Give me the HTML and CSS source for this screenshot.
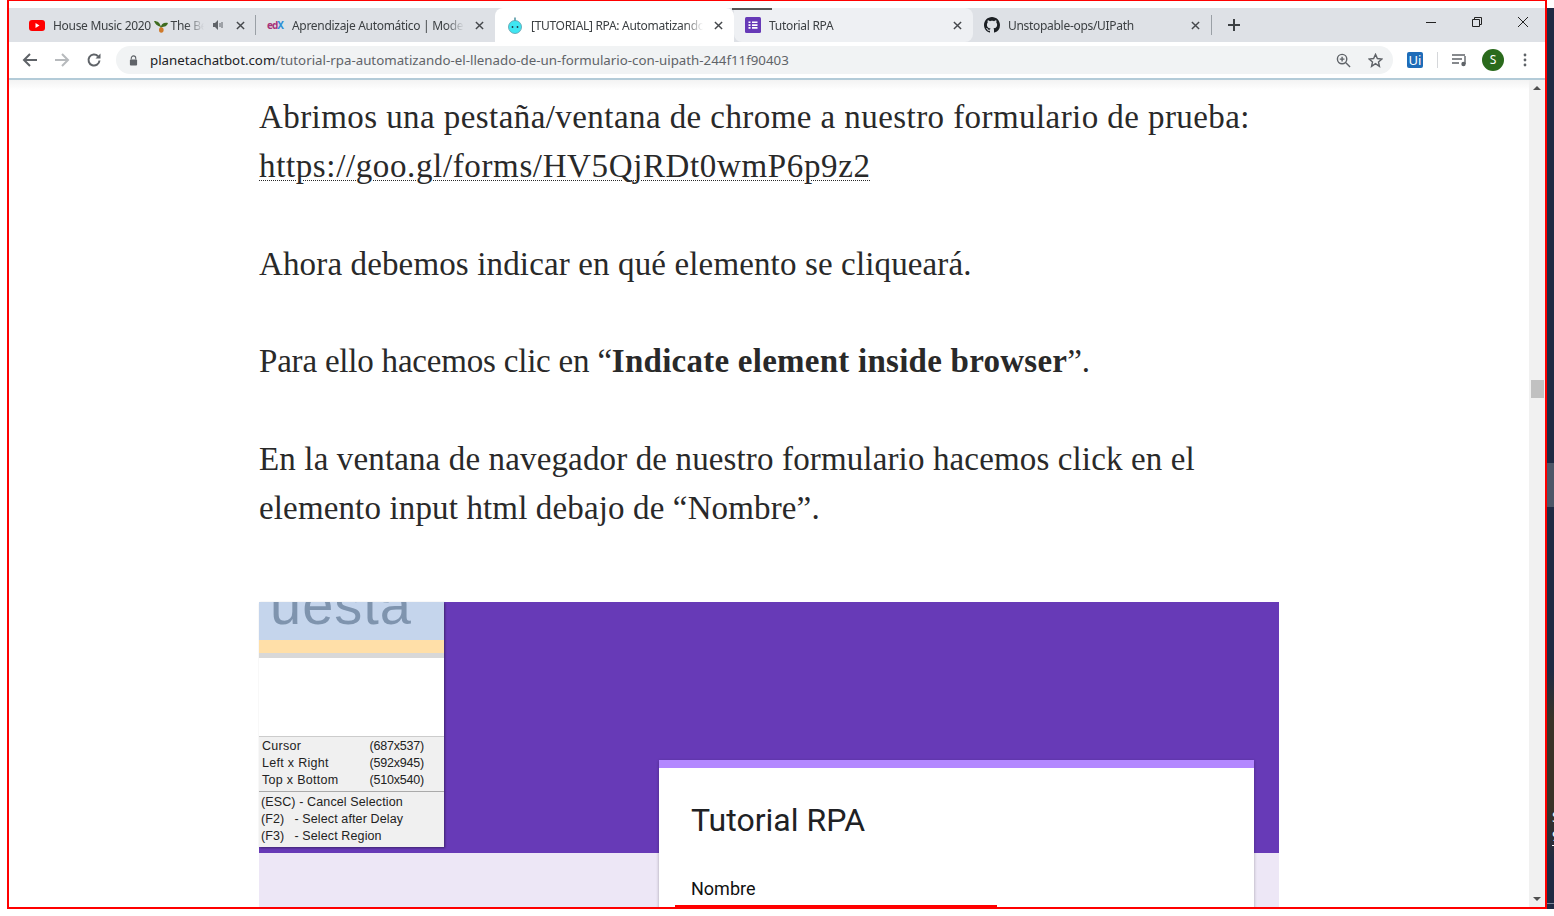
FILE: index.html
```html
<!DOCTYPE html>
<html lang="es">
<head>
    <meta charset="UTF-8">
    <title>[TUTORIAL] RPA: Automatizando</title>
    <link rel="stylesheet" href="styles.css">
</head>
<body>
    <div class="window">
        <div class="tabstrip">
            <div class="tab">
                <svg class="favicon" viewBox="0 0 16 16"><rect x="0" y="3" width="16" height="11" rx="3" fill="#f00"/><path d="M6.500 6v5l4-2.500z" fill="#fff"/></svg>
                <span class="tab-title">House Music 2020 <svg class="sprout" viewBox="0 0 14 14"><path d="M7 8C6 4 4 2 0 2c1 3 3 5 7 6zM7 8c0-3 3-5 7-4-1 3-3 4-7 4z" fill="#3d6b1f"/><path d="M7 7v3" stroke="#3d6b1f"/><ellipse cx="7.300" cy="11" rx="2.300" ry="2.800" fill="#d07a2b"/></svg> The Best Mix</span>
                <svg class="speaker" viewBox="0 0 12 12"><path d="M1 4h2l3-3v10L3 8H1z" fill="#5f6368"/><path d="M8 4v4M10 3v6" stroke="#5f6368" fill="none"/></svg>
                <svg class="close" viewBox="0 0 10 10"><path d="M1 1l8 8M9 1l-8 8"/></svg>
            </div>
            <div class="tab-sep"></div>
            <div class="tab">
                <span class="edx"><span class="edx-e">ed</span>X</span>
                <span class="tab-title">Aprendizaje Automático | Modelos</span>
                <svg class="close" viewBox="0 0 10 10"><path d="M1 1l8 8M9 1l-8 8"/></svg>
            </div>
            <div class="tab tab-active">
                <svg class="favicon favicon-tall" viewBox="0 0 16 18"><circle cx="8" cy="11" r="6.500" fill="#3fe6f2" stroke="#5a9aa8" stroke-width=".8"/><path d="M8 4.500V1.500" stroke="#3d8a98" stroke-width="1.400"/><circle cx="5.500" cy="11" r=".9" fill="#234"/><circle cx="10.500" cy="11" r=".9" fill="#234"/></svg>
                <span class="tab-title">[TUTORIAL] RPA: Automatizando el llenado</span>
                <svg class="close" viewBox="0 0 10 10"><path d="M1 1l8 8M9 1l-8 8"/></svg>
            </div>
            <div class="tab tab-hover">
                <svg class="favicon" viewBox="0 0 16 16"><rect width="16" height="16" rx="1.500" fill="#673ab7"/><path d="M3.500 4.500h2v1.600h-2zM7 4.500h5.500v1.600H7zM3.500 7.300h2v1.600h-2zM7 7.300h5.500v1.600H7zM3.500 10.100h2v1.600h-2zM7 10.100h5.500v1.600H7z" fill="#fff"/></svg>
                <span class="tab-title">Tutorial RPA</span>
                <svg class="close" viewBox="0 0 10 10"><path d="M1 1l8 8M9 1l-8 8"/></svg>
            </div>
            <div class="tab">
                <svg class="favicon" viewBox="0 0 16 16"><path fill="#1b1f23" d="M8 0C3.580 0 0 3.580 0 8c0 3.540 2.290 6.530 5.470 7.590.4.070.55-.17.55-.38 0-.19-.01-.82-.01-1.490-2.010.37-2.530-.49-2.690-.94-.09-.23-.48-.94-.82-1.130-.28-.15-.68-.52-.01-.53.63-.01 1.080.58 1.230.82.72 1.210 1.870.87 2.330.66.07-.52.28-.87.51-1.070-1.780-.2-3.640-.89-3.640-3.950 0-.87.31-1.590.82-2.150-.08-.2-.36-1.020.08-2.120 0 0 .67-.21 2.200.82.64-.18 1.320-.27 2-.27s1.360.09 2 .27c1.530-1.040 2.200-.82 2.200-.82.44 1.100.16 1.920.08 2.120.51.56.82 1.270.82 2.150 0 3.070-1.870 3.750-3.650 3.950.29.25.54.73.54 1.480 0 1.070-.01 1.930-.01 2.200 0 .21.15.46.55.38A8.010 8.010 0 0 0 16 8c0-4.420-3.580-8-8-8z"/></svg>
                <span class="tab-title">Unstopable-ops/UIPath</span>
                <svg class="close" viewBox="0 0 10 10"><path d="M1 1l8 8M9 1l-8 8"/></svg>
            </div>
            <div class="tab-sep"></div>
            <svg class="newtab" viewBox="0 0 12 12"><path d="M6 0v12M0 6h12"/></svg>
            <div class="winctrls">
                <svg viewBox="0 0 12 12"><path d="M1 6.500h10"/></svg>
                <svg viewBox="0 0 12 12"><path d="M1.500 3.500h7v7h-7zM3.500 3.500v-2h7v7h-2"/></svg>
                <svg viewBox="0 0 12 12"><path d="M1 1l10 10M11 1L1 11"/></svg>
            </div>
            <div class="tab-notch"></div>
        </div>
        <div class="toolbar">
            <svg class="navicon" viewBox="0 0 16 16"><path d="M15 8H2M8 2L2 8l6 6"/></svg>
            <svg class="navicon nav-off" viewBox="0 0 16 16"><path d="M1 8h13M8 2l6 6-6 6"/></svg>
            <svg class="navicon" viewBox="0 0 16 16"><path d="M13.500 8.500A5.500 5.500 0 1 1 12 4.200"/><path class="solid" d="M14.500 1.500v5h-5z"/></svg>
            <div class="omnibox">
                <svg class="lock" viewBox="0 0 10 12"><path d="M2.500 5V3.400a2.500 2.500 0 0 1 5 0V5" fill="none" stroke="#5f6368" stroke-width="1.200"/><rect x="1" y="5" width="8" height="6.500" rx="1" fill="#5f6368"/></svg>
                <span class="url"><span class="url-host">planetachatbot.com</span>/tutorial-rpa-automatizando-el-llenado-de-un-formulario-con-uipath-244f11f90403</span>
                <svg class="omni-icon" viewBox="0 0 16 16"><circle cx="6.500" cy="6.500" r="5"/><path d="M10.500 10.500L15 15M6.500 4v5M4 6.500h5"/></svg>
                <svg class="omni-icon" viewBox="0 0 16 16"><path d="M8 1.500l2 4.400 4.800.5-3.600 3.200 1 4.700L8 11.400l-4.200 2.900 1-4.700L1.200 6.400 6 5.900z"/></svg>
            </div>
            <span class="ext-ui">Ui</span>
            <div class="tool-sep"></div>
            <svg class="media" viewBox="0 0 16 14"><path d="M0 2h13M0 6h10M0 10h7" stroke="#5f6368" stroke-width="1.300" fill="none"/><path d="M13 3v8" stroke="#5f6368" stroke-width="1.400"/><circle cx="11.500" cy="11" r="2.200" fill="#5f6368"/></svg>
            <span class="avatar">S</span>
            <svg class="dots" viewBox="0 0 4 14"><circle cx="2" cy="2" r="1.400"/><circle cx="2" cy="7" r="1.400"/><circle cx="2" cy="12" r="1.400"/></svg>
        </div>
        <div class="viewport">
            <main class="article">
                <p class="spaced">Abrimos una pestaña/ventana de chrome a nuestro formulario de prueba: <a href="#">https://goo.gl/forms/HV5QjRDt0wmP6p9z2</a></p>
                <p class="slight">Ahora debemos indicar en qué elemento se cliqueará.</p>
                <p class="tight">Para ello hacemos clic en “<strong>Indicate element inside browser</strong>”.</p>
                <p class="slight">En la ventana de navegador de nuestro formulario hacemos click en el elemento input html debajo de “Nombre”.</p>
                <figure class="shot">
                    <div class="shot-top">
                        <div class="capture">
                            <div class="capture-head"><span>uesta</span></div>
                            <div class="capture-stripe"></div>
                            <div class="capture-gray"></div>
                            <div class="capture-blank"></div>
                            <div class="capture-info">
                                <div class="info-row"><span class="info-name">Cursor</span><span class="info-val">(687x537)</span></div>
                                <div class="info-row"><span class="info-name">Left x Right</span><span class="info-val">(592x945)</span></div>
                                <div class="info-row"><span class="info-name">Top x Bottom</span><span class="info-val">(510x540)</span></div>
                            </div>
                            <div class="capture-keys">
                                <div>(ESC) - Cancel Selection</div>
                                <div class="key-row"><span>(F2)</span><span>- Select after Delay</span></div>
                                <div class="key-row"><span>(F3)</span><span>- Select Region</span></div>
                            </div>
                        </div>
                    </div>
                    <div class="shot-bottom"></div>
                    <div class="form-card">
                        <div class="form-title">Tutorial RPA</div>
                        <div class="form-label">Nombre</div>
                        <div class="form-input"></div>
                    </div>
                </figure>
            </main>
            <div class="scrollbar">
                <span class="arrow-up"></span>
                <div class="thumb"></div>
                <span class="arrow-down"></span>
            </div>
        </div>
    </div>
    <aside class="desktop-edge">
        <div class="edge-light"></div>
        <div class="edge-brown">
            <span class="edge-text">S</span>
            <span class="edge-text edge-under">9</span>
        </div>
        <div class="edge-line"></div>
    </aside>
</body>
</html>
```

FILE: styles.css
```css
html, body {
    margin: 0;
    height: 916px;
    overflow: hidden;
    background: #fff;
}

body {
    display: flex;
    padding-left: 7px;
    box-sizing: border-box;
    font-family: "Noto Sans", Arial, sans-serif;
}

.window {
    width: 1540px;
    height: 909px;
    box-sizing: border-box;
    border: 2px solid #f00;
    border-top-width: 1px;
    display: flex;
    flex-direction: column;
    overflow: hidden;
    background: #fff;
    flex: none;
}

/* tabs */
.tabstrip {
    position: relative;
    display: flex;
    align-items: flex-start;
    height: 34px;
    margin-top: 7px;
    margin-bottom: 4px;
    padding-left: 6px;
    flex: none;
    background: #dee1e6;
}

.tab {
    display: flex;
    align-items: center;
    width: 239px;
    height: 34px;
    box-sizing: border-box;
    padding: 0 11px;
    font-size: 12px;
    letter-spacing: -.3px;
    color: #3c4043;
    flex: none;
}

.tab:nth-child(1) { width: 240px; padding: 0 10px 0 14px; }
.tab:nth-child(6) { width: 238px; }

.tab-active {
    height: 38px;
    background: #fff;
    border-radius: 8px 8px 0 0;
    padding: 0 11px 4px 12px;
}

.tab-hover {
    background: #eef0f3;
    border-radius: 0 8px 8px 8px;
}

.tab-sep {
    width: 1px;
    height: 20px;
    margin-top: 7px;
    background: #9aa0a6;
    flex: none;
}

.favicon {
    width: 16px;
    height: 16px;
    flex: none;
    margin-right: 8px;
}

.favicon-tall {
    height: 18px;
}

.tab-title {
    flex: 1;
    min-width: 0;
    white-space: nowrap;
    overflow: hidden;
    -webkit-mask-image: linear-gradient(to right, #000 calc(100% - 18px), transparent);
    mask-image: linear-gradient(to right, #000 calc(100% - 18px), transparent);
}

.sprout {
    width: 14px;
    height: 14px;
    vertical-align: -3px;
}

.speaker {
    width: 12px;
    height: 12px;
    flex: none;
    margin: 0 1px 0 8px;
}

.close {
    width: 9px;
    height: 9px;
    flex: none;
    margin-left: 11px;
    fill: none;
    stroke: #45484c;
    stroke-width: 1.6;
}

.edx {
    width: 17px;
    margin-right: 8px;
    font-size: 10px;
    font-weight: 700;
    letter-spacing: -1px;
    color: #2f8fd6;
    flex: none;
}

.edx-e {
    color: #a8327a;
}

.newtab {
    width: 12px;
    height: 12px;
    margin: 11px 0 0 16px;
    fill: none;
    stroke: #3c4043;
    stroke-width: 2;
    flex: none;
}

.winctrls {
    display: flex;
    gap: 34px;
    margin: 8px 16px 0 auto;
}

.winctrls svg {
    width: 12px;
    height: 12px;
    fill: none;
    stroke: #222;
    stroke-width: 1;
}

.tab-notch {
    position: absolute;
    left: 723px;
    top: 0;
    width: 40px;
    height: 2px;
    background: #555;
}

/* toolbar */
.toolbar {
    display: flex;
    align-items: center;
    height: 28px;
    flex: none;
    padding: 0 0 4px 13px;
    border-bottom: 2px solid #b3cbd8;
    background: #fff;
}

.navicon {
    width: 16px;
    height: 16px;
    margin-right: 16px;
    flex: none;
    fill: none;
    stroke: #5f6368;
    stroke-width: 2;
}

.nav-off {
    stroke: #b7babd;
}

.navicon .solid {
    fill: #5f6368;
    stroke: none;
}

.omnibox {
    display: flex;
    align-items: center;
    width: 1277px;
    height: 28px;
    margin-left: -2px;
    box-sizing: border-box;
    padding: 0 10px 0 13px;
    background: #f1f3f4;
    border-radius: 14px;
    flex: none;
}

.lock {
    width: 9px;
    height: 11px;
    margin-right: 12px;
    flex: none;
}

.url {
    flex: 1;
    font-size: 13.3px;
    color: #5f6368;
    white-space: nowrap;
}

.url-host {
    color: #202124;
}

.omni-icon {
    width: 15px;
    height: 15px;
    margin-left: 17px;
    fill: none;
    stroke: #5f6368;
    stroke-width: 1.5;
    flex: none;
}

.ext-ui {
    width: 16px;
    height: 16px;
    margin-left: 14px;
    background: #1e6cb8;
    border-radius: 2px;
    color: #fff;
    font-size: 13px;
    line-height: 16px;
    text-align: center;
    flex: none;
}

.tool-sep {
    width: 1px;
    height: 16px;
    margin-left: 14px;
    background: #d5d7da;
    flex: none;
}

.media {
    width: 16px;
    height: 14px;
    margin-left: 14px;
    flex: none;
}

.avatar {
    width: 22px;
    height: 22px;
    margin-left: 14px;
    border-radius: 50%;
    background: #2a6a1c;
    color: #fff;
    font-size: 12px;
    line-height: 22px;
    text-align: center;
    flex: none;
}

.dots {
    width: 4px;
    height: 14px;
    margin-left: 19px;
    fill: #5f6368;
    flex: none;
}

/* page */
.viewport {
    flex: 1;
    min-height: 0;
    display: flex;
    background: linear-gradient(#f3f3f3, #fff 10px);
}

.article {
    width: 1020px;
    margin: 0 250px;
    padding-top: 13px;
    flex: none;
    color: #292929;
    font-family: "Liberation Serif", serif;
    font-size: 33px;
    line-height: 49px;
}

.article p {
    margin: 0 0 48.7px;
}

.article .spaced { letter-spacing: .43px; }
.article .spaced a { letter-spacing: .63px; }
.article .slight { letter-spacing: .14px; }
.article .tight { letter-spacing: -.2px; }
.article .tight strong { letter-spacing: .25px; }

.article a {
    color: inherit;
    text-decoration: underline dotted 1px;
    text-underline-offset: 3px;
}

.shot {
    position: relative;
    margin: 68.7px 0 0;
}

.shot-top {
    height: 251px;
    background: #673ab7;
}

.shot-bottom {
    height: 60px;
    background: #ede7f6;
}

.capture {
    width: 185px;
    height: 245px;
    display: flex;
    flex-direction: column;
    background: #fff;
    font-family: "Liberation Sans", sans-serif;
    font-size: 12.5px;
    line-height: 17px;
    color: #222;
    box-shadow: 1px 1px 2px rgba(0, 0, 0, .4);
}

.capture-head {
    height: 38px;
    padding-left: 11px;
    background: #c5d5ec;
    overflow: hidden;
    color: #7f94ae;
    font-size: 56px;
    line-height: 5px;
    letter-spacing: 1px;
}

.capture-head span {
    filter: blur(.6px);
    display: inline-block;
}

.capture-stripe {
    height: 13px;
    background: #ffdfa8;
}

.capture-gray {
    height: 5px;
    background: #d8d8d8;
}

.capture-blank {
    flex: 1;
}

.capture-info {
    padding: 1px 20px 2px 3px;
    background: #f0f0f0;
    border-top: 1px solid #ccc;
    border-bottom: 1px solid #aaa;
}

.info-row {
    display: flex;
    justify-content: space-between;
}

.info-name {
    letter-spacing: .3px;
}

.info-val {
    letter-spacing: -.2px;
}

.capture-keys {
    padding: 2px;
    background: #f0f0f0;
    letter-spacing: .12px;
}

.key-row {
    display: flex;
    gap: 10px;
}

.form-card {
    position: absolute;
    left: 400px;
    top: 158px;
    width: 595px;
    height: 160px;
    box-sizing: border-box;
    padding: 32px 32px 0;
    background: #fff;
    border-top: 8px solid #b388ff;
    box-shadow: 0 1px 3px rgba(0, 0, 0, .3);
    font-family: Roboto, sans-serif;
    color: #202124;
}

.form-title {
    font-size: 32px;
    line-height: 40px;
}

.form-label {
    margin-top: 37px;
    font-size: 18px;
    line-height: 24px;
    color: #111;
}

.form-input {
    width: 322px;
    height: 2px;
    margin: 4px 0 0 -16px;
    background: #f00;
}

.scrollbar {
    width: 16px;
    background: #f1f1f1;
    position: relative;
    flex: none;
}

.thumb {
    position: absolute;
    top: 300px;
    left: 2px;
    width: 13px;
    height: 18px;
    background: #c1c1c1;
}

.arrow-up, .arrow-down {
    position: absolute;
    left: 4px;
    width: 0;
    height: 0;
    border: 4px solid transparent;
}

.arrow-up {
    top: 2px;
    border-bottom-color: #505050;
}

.arrow-down {
    bottom: 2px;
    border-top-color: #505050;
}

.desktop-edge {
    width: 7px;
    height: 901px;
    margin-top: 8px;
    flex: none;
    display: flex;
    flex-direction: column;
    background: #1f2a44;
    overflow: hidden;
}

.edge-light {
    height: 44px;
    margin-top: 455px;
    background: #4d5668;
    flex: none;
}

.edge-brown {
    height: 195px;
    margin-top: 163px;
    box-sizing: border-box;
    padding: 137px 0 0 5px;
    flex: none;
    background: linear-gradient(#1f2a44, #3a3328 25%, #3a3328 70%, #1f2a44);
    color: #fff;
    font-size: 15px;
    line-height: 19px;
}

.edge-text {
    display: block;
}

.edge-under {
    border-bottom: 1px solid #fff;
}

.edge-line {
    height: 1px;
    margin-top: 38px;
    background: #7d8699;
    flex: none;
}
```
